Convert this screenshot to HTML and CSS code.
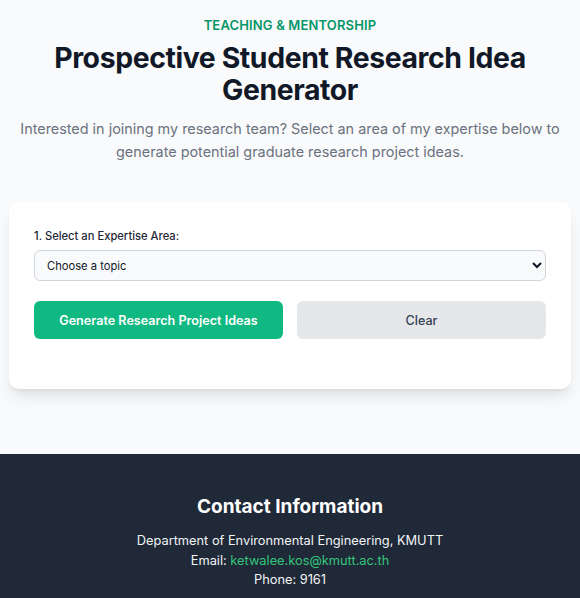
FILE: index.html
```html
<!DOCTYPE html>
<html lang="en">
<head>
<meta charset="utf-8">
<title>Prospective Student Research Idea Generator</title>
<link rel="stylesheet" href="styles.css">
</head>
<body>
<main class="main">
  <header class="hero">
    <p class="eyebrow">TEACHING &amp; MENTORSHIP</p>
    <h1 class="title">Prospective Student Research Idea Generator</h1>
    <p class="lead">Interested in joining my research team? Select an area of my expertise below to generate potential graduate research project ideas.</p>
  </header>
  <section class="card">
    <label class="label" for="topic">1. Select an Expertise Area:</label>
    <select id="topic" class="select">
      <option>Choose a topic</option>
    </select>
    <div class="actions">
      <button class="btn btn-primary" type="button">Generate Research Project Ideas</button>
      <button class="btn btn-secondary" type="button">Clear</button>
    </div>
  </section>
</main>
<footer class="footer">
  <h2 class="footer-title">Contact Information</h2>
  <p class="footer-line">Department of Environmental Engineering, KMUTT</p>
  <p class="footer-line">Email: <a class="footer-link" href="#">ketwalee.kos@kmutt.ac.th</a></p>
  <p class="footer-line">Phone: 9161</p>
</footer>
</body>
</html>
```
FILE: styles.css
```css
* { box-sizing: border-box; }
html, body { margin: 0; padding: 0; }
body {
  background: #f9fafb;
  font-family: Inter, "Noto Sans", sans-serif;
  color: #111827;
}
.main {
  padding: 14px 9px 65px;
}
.hero {
  text-align: center;
}
.eyebrow {
  margin: 1px 0 0;
  font-size: 13px;
  line-height: 20px;
  font-weight: 600;
  letter-spacing: 0.15px;
  color: #059669;
}
.title {
  margin: 7px 0 0;
  font-size: 28.4px;
  line-height: 32px;
  font-weight: 700;
  letter-spacing: -0.4px;
  color: #111827;
}
.lead {
  margin: 11px 0 0;
  font-size: 14.4px;
  line-height: 23px;
  color: #6b7280;
}
.card {
  margin-top: 39px;
  background: #ffffff;
  border-radius: 10px;
  box-shadow: 0 10px 15px -3px rgba(0,0,0,0.1), 0 4px 6px -4px rgba(0,0,0,0.1);
  padding: 26px 25px 50px;
  display: flex;
  flex-direction: column;
}
.label {
  font-size: 11.2px;
  line-height: 16px;
  font-weight: 500;
  color: #1f2937;
}
.select {
  margin-top: 6px;
  height: 31px;
  width: 100%;
  border: 1px solid #d1d5db;
  border-radius: 6px;
  background: #f9fafb;
  font-family: Inter, "Noto Sans", sans-serif;
  font-size: 11.2px;
  color: #111827;
  padding: 0 8px;
}
.actions {
  margin-top: 20px;
  display: flex;
  gap: 14px;
}
.btn {
  flex: 1;
  height: 38px;
  border: none;
  border-radius: 6px;
  font-family: Inter, "Noto Sans", sans-serif;
  font-size: 12.6px;
  font-weight: 600;
}
.btn-primary {
  background: #10b981;
  color: #ffffff;
}
.btn-secondary {
  background: #e5e7eb;
  color: #374151;
  font-weight: 500;
}
.footer {
  background: #1f2937;
  color: #ffffff;
  text-align: center;
  padding: 40px 20px 40px;
}
.footer-title {
  margin: 0 0 11px;
  font-size: 19px;
  line-height: 26px;
  font-weight: 700;
}
.footer-line {
  margin: 0;
  font-size: 12.8px;
  line-height: 19.5px;
  color: #f3f4f6;
}
.footer-link {
  color: #34c47c;
  text-decoration: none;
}
```
